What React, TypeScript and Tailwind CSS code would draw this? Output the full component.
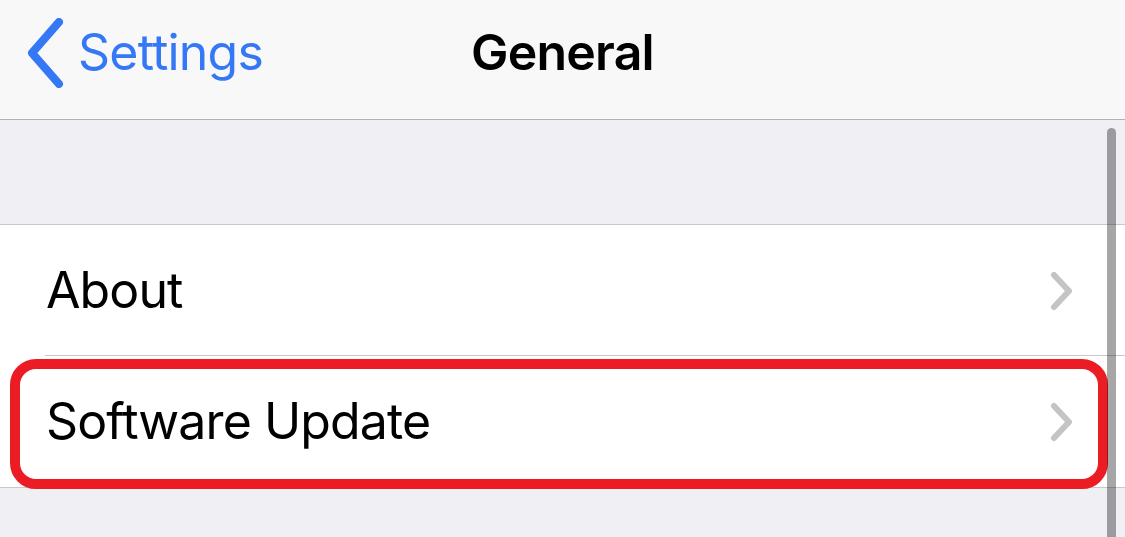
const font = { fontFamily: 'Inter, "Liberation Sans", sans-serif' };

function BackChevron() {
  return (
    <svg width="44" height="70" viewBox="0 0 44 70" fill="none" aria-hidden="true">
      <path d="M36 4 L9 35 L36 66" stroke="#3478F6" strokeWidth="8" strokeLinecap="round" strokeLinejoin="round" />
    </svg>
  );
}

function RowChevron() {
  return (
    <svg width="28" height="42" viewBox="0 0 28 42" fill="none" aria-hidden="true">
      <path d="M6 5 L21 21 L6 37" stroke="#C4C4C7" strokeWidth="6" strokeLinecap="round" strokeLinejoin="round" />
    </svg>
  );
}

function Row({ label, last }: { label: string; last?: boolean }) {
  return (
    <div className="relative flex h-[131px] items-center bg-white pl-[46px] pr-[49px]">
      <span className="flex-1 text-[50px] tracking-[-0.9px] text-black">{label}</span>
      <RowChevron />
      {!last && <div className="absolute bottom-0 left-[45px] right-0 h-px bg-[#c8c7cc]" />}
    </div>
  );
}

export default function App() {
  return (
    <div className="relative h-[537px] w-[1125px] overflow-hidden bg-[#efeff4]" style={font}>
      <header className="relative flex h-[120px] items-center border-b border-[#b1b1b1] bg-[#f8f8f8] pb-[14px]">
        <div className="flex items-center pl-[23px]">
          <BackChevron />
          <span className="ml-[11px] text-[50px] tracking-[-0.8px] text-[#3478F6]">Settings</span>
        </div>
        <h1 className="absolute left-0 right-0 text-center text-[50px] font-semibold tracking-[-0.8px] text-black">
          General
        </h1>
      </header>

      <div className="h-[104px]" />

      <div className="border-y border-[#c8c7cc]">
        <Row label="About" />
        <Row label="Software Update" last />
      </div>

      {/* highlight around Software Update */}
      <div className="pointer-events-none absolute left-[10px] top-[359px] h-[130px] w-[1098px] rounded-[26px] border-[10px] border-[#ec1c24]" />

      {/* scroll indicator */}
      <div className="absolute left-[1107px] top-[128px] h-[420px] w-[9px] rounded-full bg-black/35" />
    </div>
  );
}
